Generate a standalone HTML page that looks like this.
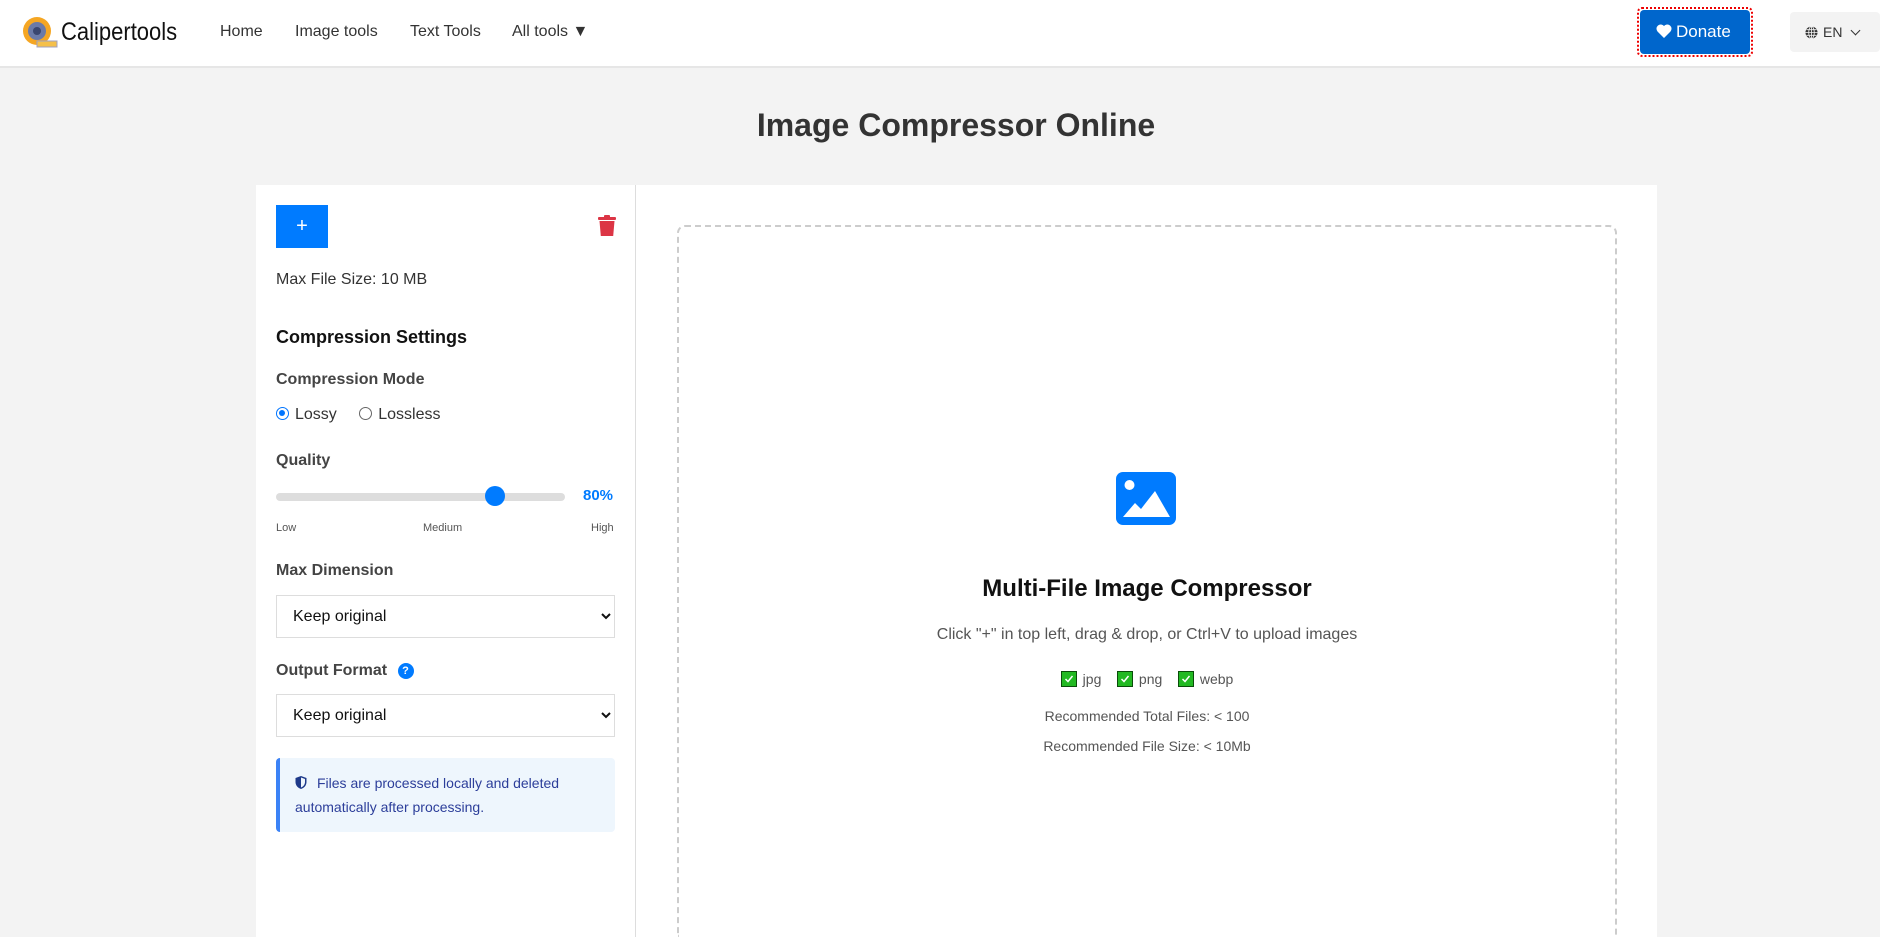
<!DOCTYPE html>
<html><head><meta charset="utf-8"><style>
*{box-sizing:border-box;margin:0;padding:0}
html,body{width:1880px;height:937px;overflow:hidden}
body{background:#f3f3f3;font-family:"Liberation Sans",Arial,sans-serif;color:#333}
#wrap{position:relative;width:1880px;height:937px;overflow:hidden}
.abs{position:absolute}
header{position:absolute;left:0;top:0;width:1880px;height:68px;background:#fff;border-bottom:2px solid #e6e6e6}
.nav{position:absolute;top:23px;font-size:16px;color:#333}
.lbl{position:absolute;left:276px;font-size:16px;font-weight:bold;color:#444}
select{position:absolute;left:276px;width:339px;height:43px;border:1px solid #ddd;background:#fff;font-size:16px;padding-left:12px;font-family:"Liberation Sans",Arial,sans-serif;color:#111}
.cb{display:inline-block;width:16px;height:16px;background:#22b922;border:1px solid #0a4d0a;vertical-align:-3px;margin-right:6px;position:relative}
</style></head><body><div id="wrap">
<header>
 <svg class="abs" style="left:20px;top:16px" width="40" height="32" viewBox="0 0 40 32"><circle cx="17" cy="15" r="14" fill="#f5a623"/><circle cx="17" cy="15" r="9" fill="#6b7aa8"/><circle cx="17" cy="15" r="4" fill="#3a4670"/><rect x="17" y="25" width="20" height="6" fill="#f5c04a" stroke="#a0a0c0"/></svg>
 <div class="abs" style="left:61px;top:18px;font-size:25px;color:#111;transform:scaleX(.88);transform-origin:left">Calipertools</div>
 <div class="nav" style="left:220px">Home</div>
 <div class="nav" style="left:295px">Image tools</div>
 <div class="nav" style="left:410px">Text Tools</div>
 <div class="nav" style="left:512px">All tools ▼</div>
 <div class="abs" style="left:1637px;top:7px;width:116px;height:50px;border:2px dotted #e00;border-radius:5px"></div>
 <div class="abs" style="left:1640px;top:10px;width:110px;height:44px;background:#0066cc;border-radius:4px;color:#fff;font-size:17px;line-height:44px;padding-left:16px">
  <svg width="16" height="14" viewBox="0 0 16 14" style="vertical-align:-1px;margin-right:4px"><path d="M8 14L1.5 7.5A4 4 0 0 1 8 2a4 4 0 0 1 6.5 5.5z" fill="#fff"/></svg>Donate</div>
 <div class="abs" style="left:1790px;top:12px;width:90px;height:40px;background:#f3f3f3;border-radius:4px;font-size:14px;line-height:40px;padding-left:15px;color:#333">
  <svg width="13" height="13" viewBox="0 0 14 14" style="vertical-align:-2px;margin-right:5px"><circle cx="7" cy="7" r="6.5" fill="#333"/><path d="M0.5 7h13M7 0.5v13M1.5 4h11M1.5 10h11" stroke="#f3f3f3" stroke-width="0.9"/><ellipse cx="7" cy="7" rx="3" ry="6.5" fill="none" stroke="#f3f3f3" stroke-width="0.9"/></svg>EN <span style="display:inline-block;width:7px;height:7px;border-right:1.6px solid #333;border-bottom:1.6px solid #333;transform:rotate(45deg);margin-left:6px;vertical-align:3px"></span></div>
</header>
<div class="abs" style="left:0;width:1880px;top:107px;text-align:center;font-size:32px;font-weight:bold;color:#333;padding-left:32px">Image Compressor Online</div>
<div class="abs" style="left:256px;top:185px;width:1401px;height:752px;background:#fff"></div>
<div class="abs" style="left:635px;top:185px;width:1px;height:752px;background:#ddd"></div>
<div class="abs" style="left:276px;top:205px;width:52px;height:43px;background:#007bff;color:#fff;font-size:20px;text-align:center;line-height:42px">+</div>
<svg class="abs" style="left:597px;top:215px" width="20" height="22" viewBox="0 0 20 22"><rect x="1" y="2" width="18" height="3" rx="1" fill="#dc3545"/><rect x="7" y="0" width="6" height="3" rx="1" fill="#dc3545"/><path d="M2.5 6h15l-1.3 15H3.8z" fill="#dc3545"/></svg>
<div class="abs" style="left:276px;top:271px;font-size:16px;color:#333">Max File Size: 10 MB</div>
<div class="abs" style="left:276px;top:327px;font-size:18px;font-weight:bold;color:#111">Compression Settings</div>
<div class="lbl" style="top:371px">Compression Mode</div>
<div class="abs" style="left:276px;top:406px;font-size:16px;color:#333">
 <span style="display:inline-block;width:13px;height:13px;border:1.5px solid #0075ff;border-radius:50%;vertical-align:-1px;position:relative;margin-right:6px"><span style="position:absolute;left:2px;top:2px;width:6px;height:6px;border-radius:50%;background:#0075ff"></span></span>Lossy
 <span style="display:inline-block;width:13px;height:13px;border:1px solid #666;border-radius:50%;vertical-align:-1px;margin:0 6px 0 18px"></span>Lossless</div>
<div class="lbl" style="top:452px">Quality</div>
<div class="abs" style="left:276px;top:493px;width:289px;height:8px;background:#ddd;border-radius:4px"></div>
<div class="abs" style="left:485px;top:486px;width:20px;height:20px;background:#007bff;border-radius:50%"></div>
<div class="abs" style="left:583px;top:487px;font-size:15px;font-weight:bold;color:#007bff">80%</div>
<div class="abs" style="left:276px;top:522px;font-size:11px;color:#555">Low</div>
<div class="abs" style="left:423px;top:522px;font-size:11px;color:#555">Medium</div>
<div class="abs" style="left:591px;top:522px;font-size:11px;color:#555">High</div>
<div class="lbl" style="top:562px">Max Dimension</div>
<select style="top:595px"><option>Keep original</option></select>
<div class="lbl" style="top:662px">Output Format <span style="display:inline-block;width:16px;height:16px;border-radius:50%;background:#007bff;color:#fff;font-size:11px;text-align:center;line-height:16px;margin-left:6px;vertical-align:1px">?</span></div>
<select style="top:694px"><option>Keep original</option></select>
<div class="abs" style="left:276px;top:758px;width:339px;height:74px;background:#eef6fd;border-left:4px solid #3b82f6;border-radius:4px;padding:13px 0 0 15px;font-size:14px;line-height:24px;color:#2c3e9a">
 <svg width="12" height="13" viewBox="0 0 12 13" style="vertical-align:-1px;margin-right:10px"><path d="M6 0L11.5 2v4c0 3.5-2.5 6-5.5 7C3 12 .5 9.5.5 6V2z" fill="#1e3a8a"/><path d="M6 1.5v10c2.3-1 4-3 4-5.5V3z" fill="#eef6fd"/></svg>Files are processed locally and deleted<br>automatically after processing.</div>
<div class="abs" style="left:677px;top:225px;width:940px;height:712px;border:2px dashed #ccc;border-bottom:none;border-radius:8px 8px 0 0"></div>
<svg class="abs" style="left:1116px;top:472px" width="60" height="54" viewBox="0 0 60 54"><rect width="60" height="53" rx="7" fill="#007bff"/><circle cx="13.5" cy="13" r="5" fill="#fff"/><path d="M7 45l12-14 6 6 14-18 15 26z" fill="#fff"/></svg>
<div class="abs" style="left:677px;width:940px;top:575px;text-align:center;font-size:24px;font-weight:bold;color:#111">Multi-File Image Compressor</div>
<div class="abs" style="left:677px;width:940px;top:626px;text-align:center;font-size:16px;color:#555">Click "+" in top left, drag &amp; drop, or Ctrl+V to upload images</div>
<div class="abs" style="left:677px;width:940px;top:671px;text-align:center;font-size:14px;color:#555">
 <span class="cb"><svg class="abs" style="left:2px;top:2px" width="10" height="10" viewBox="0 0 10 10"><path d="M1.5 5l2.5 2.5L8.5 2" stroke="#fff" stroke-width="1.5" fill="none"/></svg></span>jpg&nbsp;&nbsp;&nbsp;
 <span class="cb"><svg class="abs" style="left:2px;top:2px" width="10" height="10" viewBox="0 0 10 10"><path d="M1.5 5l2.5 2.5L8.5 2" stroke="#fff" stroke-width="1.5" fill="none"/></svg></span>png&nbsp;&nbsp;&nbsp;
 <span class="cb"><svg class="abs" style="left:2px;top:2px" width="10" height="10" viewBox="0 0 10 10"><path d="M1.5 5l2.5 2.5L8.5 2" stroke="#fff" stroke-width="1.5" fill="none"/></svg></span>webp</div>
<div class="abs" style="left:677px;width:940px;top:708px;text-align:center;font-size:14px;color:#555">Recommended Total Files: &lt; 100</div>
<div class="abs" style="left:677px;width:940px;top:738px;text-align:center;font-size:14px;color:#555">Recommended File Size: &lt; 10Mb</div>
</div></body></html>
